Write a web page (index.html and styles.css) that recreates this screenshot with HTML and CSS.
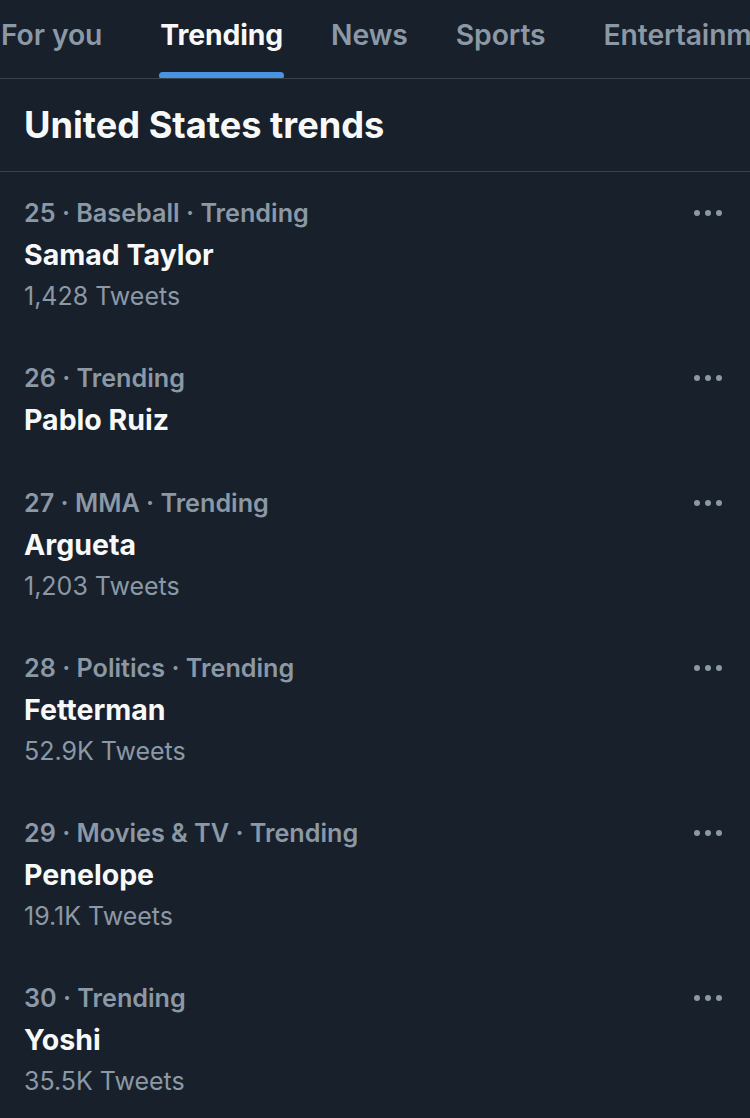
FILE: index.html
```html
<!DOCTYPE html>
<html>
<head>
<meta charset="utf-8">
<link rel="stylesheet" href="styles.css">
</head>
<body>
<div class="page">
  <nav class="tabs">
    <div class="tab tab-foryou">For you</div>
    <div class="tab tab-active">Trending</div>
    <div class="tab">News</div>
    <div class="tab tab-sports">Sports</div>
    <div class="tab">Entertainment</div>
  </nav>
  <h1 class="heading">United States trends</h1>
  <ul class="trends">
    <li class="trend">
      <div class="trend-body">
        <div class="meta">25 · Baseball · Trending</div>
        <div class="title">Samad Taylor</div>
        <div class="count">1,428 Tweets</div>
      </div>
      <div class="more"><span></span><span></span><span></span></div>
    </li>
    <li class="trend">
      <div class="trend-body">
        <div class="meta">26 · Trending</div>
        <div class="title">Pablo Ruiz</div>
      </div>
      <div class="more"><span></span><span></span><span></span></div>
    </li>
    <li class="trend">
      <div class="trend-body">
        <div class="meta">27 · MMA · Trending</div>
        <div class="title">Argueta</div>
        <div class="count">1,203 Tweets</div>
      </div>
      <div class="more"><span></span><span></span><span></span></div>
    </li>
    <li class="trend">
      <div class="trend-body">
        <div class="meta">28 · Politics · Trending</div>
        <div class="title">Fetterman</div>
        <div class="count">52.9K Tweets</div>
      </div>
      <div class="more"><span></span><span></span><span></span></div>
    </li>
    <li class="trend">
      <div class="trend-body">
        <div class="meta">29 · Movies &amp; TV · Trending</div>
        <div class="title">Penelope</div>
        <div class="count">19.1K Tweets</div>
      </div>
      <div class="more"><span></span><span></span><span></span></div>
    </li>
    <li class="trend">
      <div class="trend-body">
        <div class="meta">30 · Trending</div>
        <div class="title">Yoshi</div>
        <div class="count">35.5K Tweets</div>
      </div>
      <div class="more"><span></span><span></span><span></span></div>
    </li>
  </ul>
</div>
</body>
</html>
```
FILE: styles.css
```css
* { box-sizing: border-box; }
html, body {
  margin: 0;
  padding: 0;
  background: #18202b;
}
body {
  width: 750px;
  height: 1118px;
  overflow: hidden;
  font-family: "Inter", "Roboto", "Liberation Sans", sans-serif;
  color: #f7f9f9;
}
.page { width: 750px; }
.tabs {
  display: flex;
  height: 79px;
  border-bottom: 1px solid #38444d;
  white-space: nowrap;
  overflow: hidden;
  gap: 48px;
}
.tab {
  position: relative;
  font-size: 28.3px;
  font-weight: 600;
  color: #8b98a5;
  line-height: 70px;
  letter-spacing: -0.1px;
  flex: none;
}
.tab-foryou { margin-left: 1px; margin-right: 10px; }
.tab-sports { margin-right: 10px; }
.tab-active {
  color: #f7f9f9;
  font-weight: 700;
}
.tab-active::after {
  content: "";
  position: absolute;
  left: -1px;
  right: -1px;
  bottom: -1px;
  height: 7px;
  border-radius: 4px;
  background: #4a93e2;
}
.heading {
  margin: 0;
  padding: 0 24px;
  height: 93px;
  line-height: 92px;
  font-size: 36.2px;
  font-weight: 700;
  letter-spacing: 0;
  border-bottom: 1px solid #38444d;
}
.trends {
  list-style: none;
  margin: 0;
  padding: 0;
}
.trend {
  display: flex;
  justify-content: space-between;
  align-items: flex-start;
  padding: 21px 24px;
}
.meta {
  font-size: 25.2px;
  font-weight: 600;
  color: #8b98a5;
  line-height: 40px;
}
.title {
  font-size: 28.5px;
  font-weight: 700;
  line-height: 43px;
}
.count {
  font-size: 25px;
  font-weight: 400;
  color: #8b98a5;
  line-height: 40px;
}
.more {
  display: flex;
  gap: 5px;
  height: 40px;
  align-items: center;
  padding-right: 4px;
}
.more span {
  width: 6px;
  height: 6px;
  border-radius: 50%;
  background: #8b98a5;
}
```
